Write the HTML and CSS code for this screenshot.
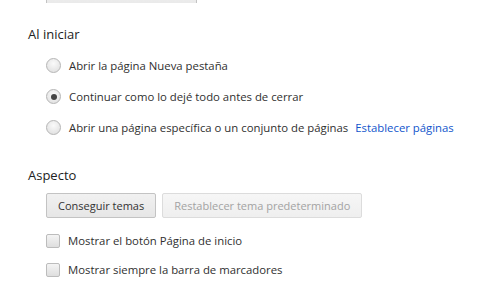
FILE: index.html
```html
<!DOCTYPE html>
<html lang="es">
<head>
<meta charset="utf-8">
<link rel="stylesheet" href="styles.css">
</head>
<body>
<div class="page">
  <div class="top-btn-row"><span class="btn top-btn"></span></div>

  <section class="section startup">
    <h3 class="heading">Al iniciar</h3>
    <div class="options">
      <label class="row"><span class="radio"></span><span class="label">Abrir la página Nueva pestaña</span></label>
      <label class="row"><span class="radio checked"></span><span class="label">Continuar como lo dejé todo antes de cerrar</span></label>
      <label class="row"><span class="radio"></span><span class="label">Abrir una página específica o un conjunto de páginas</span><a class="link">Establecer páginas</a></label>
    </div>
  </section>

  <section class="section appearance">
    <h3 class="heading">Aspecto</h3>
    <div class="options">
      <div class="buttons">
        <span class="btn">Conseguir temas</span>
        <span class="btn disabled">Restablecer tema predeterminado</span>
      </div>
      <label class="row check-row"><span class="checkbox"></span><span class="label">Mostrar el botón Página de inicio</span></label>
      <label class="row check-row"><span class="checkbox"></span><span class="label">Mostrar siempre la barra de marcadores</span></label>
    </div>
  </section>
</div>
</body>
</html>
```
FILE: styles.css
```css
html, body {
  margin: 0;
  padding: 0;
  background: #fff;
}
body {
  font-family: "Open Sans", "Noto Sans", sans-serif;
  font-size: 11.35px;
  color: #303030;
}
.page {
  width: 478px;
  height: 291px;
  overflow: hidden;
}
.top-btn-row {
  padding-left: 46px;
  height: 3px;
  overflow: hidden;
}
.top-btn {
  margin-top: -23px;
  width: 151px;
}
.btn {
  display: inline-flex;
  align-items: center;
  justify-content: center;
  height: 25px;
  box-sizing: border-box;
  padding: 0 11px;
  border: 1px solid #c3c3c3;
  border-radius: 2px;
  background: linear-gradient(#f1f1f1, #e6e6e6);
  color: #333;
  font-size: 11px;
  white-space: nowrap;
}
.btn.disabled {
  color: #a3a3a3;
  border-color: #dcdcdc;
  background: linear-gradient(#f6f6f6, #efefef);
}
.section {
  padding-left: 28px;
}
.heading {
  margin: 0;
  font-weight: normal;
  font-size: 13px;
  color: #222;
  height: 18px;
  line-height: 18px;
}
.startup {
  padding-top: 22px;
}
.startup .heading {
  margin-bottom: 7px;
}
.options {
  padding-left: 18px;
}
.row {
  display: flex;
  align-items: center;
  height: 31px;
}
.radio {
  width: 13px;
  height: 13px;
  border-radius: 50%;
  border: 1px solid #b5b5b5;
  background: radial-gradient(circle at 50% 35%, #fafafa, #dcdcdc);
  margin-right: 8px;
  flex: none;
  position: relative;
}
.radio.checked::after {
  content: "";
  position: absolute;
  left: 3.5px;
  top: 3.5px;
  width: 6px;
  height: 6px;
  border-radius: 50%;
  background: #444;
}
.link {
  color: #1155cc;
  margin-left: 7px;
}
.appearance {
  padding-top: 23px;
}
.appearance .heading {
  margin-bottom: 9px;
}
.buttons {
  display: flex;
  gap: 6px;
  margin-bottom: 8px;
}
.check-row {
  height: 29px;
}
.checkbox {
  width: 12px;
  height: 12px;
  border: 1px solid #bcbcbc;
  border-radius: 2px;
  background: linear-gradient(#f4f4f4, #dedede);
  margin-right: 8px;
  flex: none;
}
```
